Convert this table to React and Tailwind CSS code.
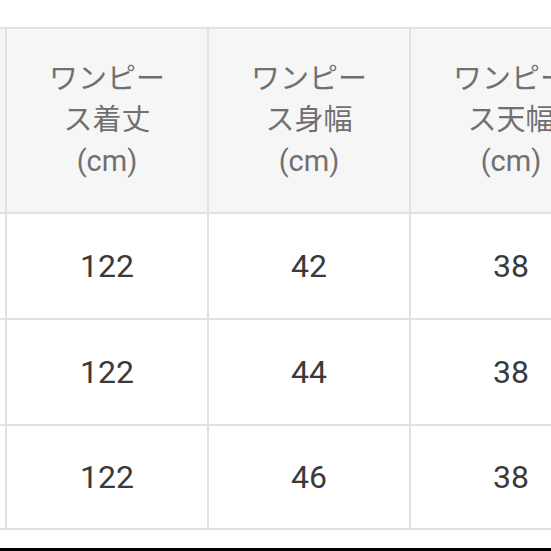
import React from "react";

const headers = [
  ["ワンピー", "ス着丈", "(cm)"],
  ["ワンピー", "ス身幅", "(cm)"],
  ["ワンピー", "ス天幅", "(cm)"],
];

const rows = [
  ["122", "42", "38"],
  ["122", "44", "38"],
  ["122", "46", "38"],
];

export default function App() {
  return (
    <div
      className="w-[551px] h-[551px] bg-white overflow-hidden flex flex-col"
      style={{ fontFamily: "Roboto, 'Noto Sans CJK JP', sans-serif" }}
    >
      <div className="h-[27px] shrink-0" />
      <div className="flex flex-col w-[700px] border-t-2 border-[#e2e2e2]">
        <div className="flex h-[185px] bg-[#f6f6f6] border-b-2 border-[#e2e2e2]">
          <div className="w-[7px] shrink-0 border-r-2 border-[#e2e2e2]" />
          {headers.map((h, i) => (
            <div
              key={i}
              className="w-[202px] shrink-0 border-r-2 border-[#e2e2e2] flex flex-col items-center justify-center text-[29px] leading-[41px] text-[#707070]"
            >
              {h.map((l, j) => (
                <div key={j}>{l}</div>
              ))}
            </div>
          ))}
        </div>
        {rows.map((r, i) => (
          <div
            key={i}
            className={`flex ${i === 2 ? "h-[104px]" : "h-[106px]"} bg-white border-b-2 border-[#e2e2e2]`}
          >
            <div className="w-[7px] shrink-0 border-r-2 border-[#e2e2e2]" />
            {r.map((c, j) => (
              <div
                key={j}
                className="w-[202px] shrink-0 border-r-2 border-[#e2e2e2] flex items-center justify-center text-[32px] text-[#3a3a3a]"
              >
                {c}
              </div>
            ))}
          </div>
        ))}
      </div>
      <div className="flex-1" />
      <div className="h-[3px] bg-black shrink-0" />
    </div>
  );
}
